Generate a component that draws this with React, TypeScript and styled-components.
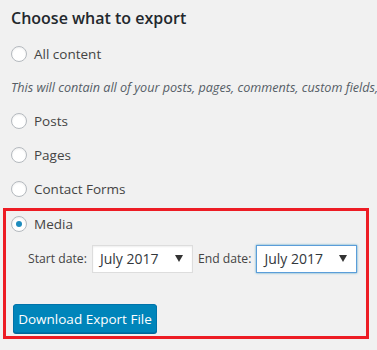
import React from "react";
import styled, { createGlobalStyle } from "styled-components";

const GlobalStyle = createGlobalStyle`
  html, body {
    margin: 0;
    padding: 0;
    background: #f1f1f1;
  }
  body {
    font-family: "Open Sans", "Noto Sans", "Liberation Sans", sans-serif;
    font-size: 13px;
    color: #444;
  }
`;

const Page = styled.div`
  width: 377px;
  height: 350px;
  overflow: hidden;
  padding: 0 0 0 11px;
  box-sizing: border-box;
`;

const Title = styled.h2`
  margin: 0;
  height: 37px;
  line-height: 36px;
  font-size: 16px;
  font-weight: 600;
  color: #23282d;
  white-space: nowrap;
`;

const Option = styled.label`
  display: flex;
  align-items: center;
  gap: 7px;
  height: 34px;
  font-size: 13.5px;
  color: #444;
  white-space: nowrap;
`;

const Radio = styled.span<{ checked?: boolean }>`
  position: relative;
  width: 16px;
  height: 16px;
  border-radius: 50%;
  border: 1px solid #b4b9be;
  background: #fff;
  box-sizing: border-box;
  box-shadow: inset 0 1px 2px rgba(0, 0, 0, 0.07);
  flex: none;

  &::after {
    content: "";
    display: ${(p) => (p.checked ? "block" : "none")};
    position: absolute;
    left: 4px;
    top: 4px;
    width: 6px;
    height: 6px;
    border-radius: 50%;
    background: #1e8cbe;
  }
`;

const Description = styled.p`
  margin: 0;
  height: 33px;
  line-height: 33px;
  font-style: italic;
  font-size: 12.6px;
  color: #555d66;
  white-space: nowrap;
`;

const Highlight = styled.section`
  margin: 2px 8px 0 -8px;
  padding: 0 0 3px 5px;
  border: 3px solid #ed1c24;
  height: 131px;
  box-sizing: border-box;
  display: flex;
  flex-direction: column;
`;

const MediaOption = styled(Option)`
  height: 25px;
`;

const DateRow = styled.div`
  display: flex;
  align-items: center;
  gap: 5px;
  margin: 9px 0 0 17px;
  height: 27px;
`;

const DateLabel = styled.span`
  font-size: 12.2px;
  color: #444;
  white-space: nowrap;
`;

const Select = styled.div<{ focused?: boolean }>`
  display: flex;
  align-items: center;
  justify-content: space-between;
  width: 101px;
  height: 28px;
  flex: none;
  box-sizing: border-box;
  padding: 0 9px 0 7px;
  background: #fff;
  border: 1px solid ${(p) => (p.focused ? "#5b9dd9" : "#ddd")};
  box-shadow: ${(p) =>
    p.focused ? "0 0 2px rgba(30, 140, 190, 0.8)" : "inset 0 1px 2px rgba(0,0,0,0.07)"};
  font-size: 14px;
  color: #32373c;
  white-space: nowrap;
`;

const Arrow = styled.span`
  width: 0;
  height: 0;
  border-left: 4px solid transparent;
  border-right: 4px solid transparent;
  border-top: 7px solid #333;
`;

const Button = styled.button`
  margin: 32px 0 0 2px;
  width: 144px;
  height: 29px;
  padding: 0;
  border: 1px solid #0073aa;
  border-radius: 3px;
  background: #0085ba;
  box-shadow: 0 1px 0 #006799;
  color: #fff;
  font-family: inherit;
  font-size: 13.5px;
  white-space: nowrap;
`;

const App = () => {
  return (
    <>
      <GlobalStyle />
      <Page>
        <Title>Choose what to export</Title>
        <Option>
          <Radio />
          All content
        </Option>
        <Description>
          This will contain all of your posts, pages, comments, custom fields,
        </Description>
        <Option>
          <Radio />
          Posts
        </Option>
        <Option>
          <Radio />
          Pages
        </Option>
        <Option>
          <Radio />
          Contact Forms
        </Option>
        <Highlight>
          <MediaOption>
            <Radio checked />
            Media
          </MediaOption>
          <DateRow>
            <DateLabel>Start date:</DateLabel>
            <Select>
              July 2017
              <Arrow />
            </Select>
            <DateLabel>End date:</DateLabel>
            <Select focused>
              July 2017
              <Arrow />
            </Select>
          </DateRow>
          <Button>Download Export File</Button>
        </Highlight>
      </Page>
    </>
  );
};

export default App;
